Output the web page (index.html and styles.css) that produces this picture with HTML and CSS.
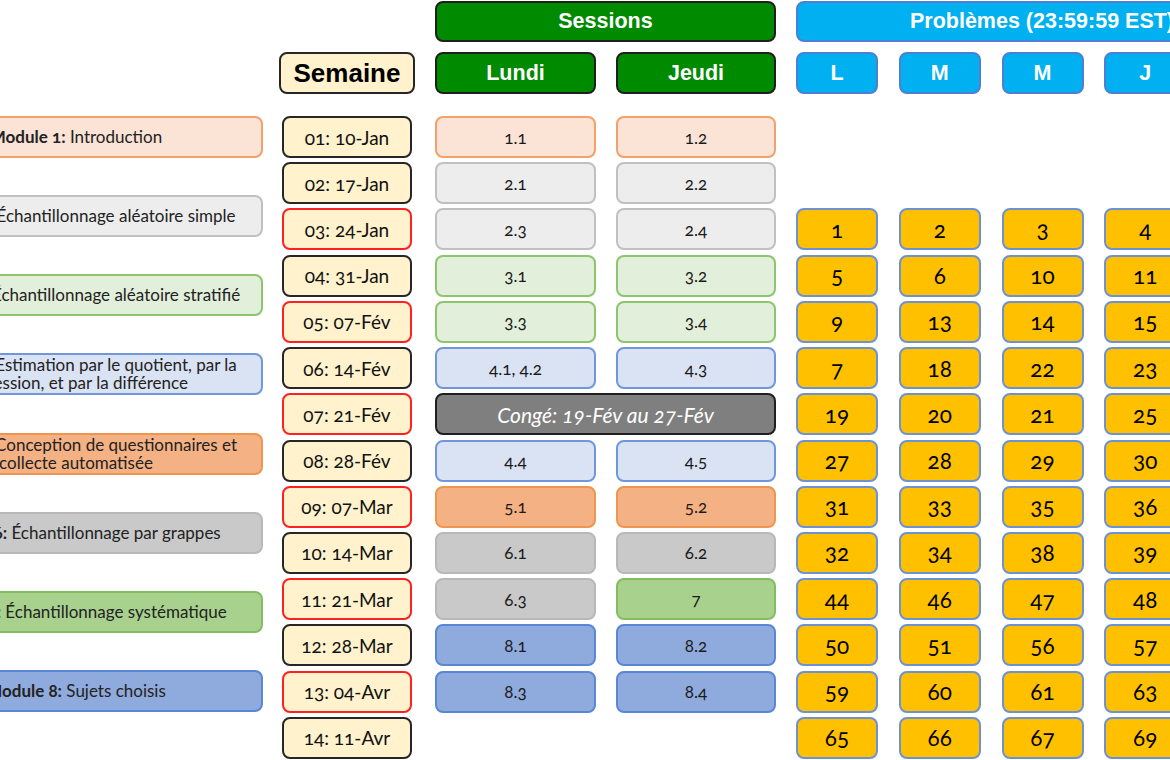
FILE: index.html
```html
<!DOCTYPE html>
<html lang="fr">
<head>
<meta charset="utf-8">
<title>Calendrier du cours</title>
<link rel="stylesheet" href="styles.css">
</head>
<body>
<main class="board">
  <section class="modules">
    <div class="module m1"><p><b>Module 1:</b> Introduction</p></div>
    <div class="module m2"><p><b>Module 2:</b> Échantillonnage aléatoire simple</p></div>
    <div class="module m3"><p><b>Module 3:</b> Échantillonnage aléatoire stratifié</p></div>
    <div class="module m4"><p><b>Module 4:</b> Estimation par le quotient, par la<br>régression, et par la différence</p></div>
    <div class="module m5"><p><b>Module 5:</b> Conception de questionnaires et<br>collecte automatisée</p></div>
    <div class="module m6"><p><b>Module 6:</b> Échantillonnage par grappes</p></div>
    <div class="module m7"><p><b>Module 7:</b> Échantillonnage systématique</p></div>
    <div class="module m8"><p><b>Module 8:</b> Sujets choisis</p></div>
  </section>

  <section class="weeks">
    <div class="week-head">Semaine</div>
    <div class="week-list">
      <div class="week">01: 10-Jan</div>
      <div class="week">02: 17-Jan</div>
      <div class="week alert">03: 24-Jan</div>
      <div class="week">04: 31-Jan</div>
      <div class="week alert">05: 07-Fév</div>
      <div class="week">06: 14-Fév</div>
      <div class="week alert">07: 21-Fév</div>
      <div class="week">08: 28-Fév</div>
      <div class="week alert">09: 07-Mar</div>
      <div class="week">10: 14-Mar</div>
      <div class="week alert">11: 21-Mar</div>
      <div class="week">12: 28-Mar</div>
      <div class="week alert">13: 04-Avr</div>
      <div class="week">14: 11-Avr</div>
    </div>
  </section>

  <section class="sessions">
    <div class="group-head green">Sessions</div>
    <div class="session-days">
      <div class="day-head green">Lundi</div>
      <div class="day-head green">Jeudi</div>
    </div>
    <div class="session-grid">
      <div class="session m1">1.1</div><div class="session m1">1.2</div>
      <div class="session m2">2.1</div><div class="session m2">2.2</div>
      <div class="session m2">2.3</div><div class="session m2">2.4</div>
      <div class="session m3">3.1</div><div class="session m3">3.2</div>
      <div class="session m3">3.3</div><div class="session m3">3.4</div>
      <div class="session m4">4.1, 4.2</div><div class="session m4">4.3</div>
      <div class="session break">Congé: 19-Fév au 27-Fév</div>
      <div class="session m4">4.4</div><div class="session m4">4.5</div>
      <div class="session m5">5.1</div><div class="session m5">5.2</div>
      <div class="session m6">6.1</div><div class="session m6">6.2</div>
      <div class="session m6">6.3</div><div class="session m7">7</div>
      <div class="session m8">8.1</div><div class="session m8">8.2</div>
      <div class="session m8">8.3</div><div class="session m8">8.4</div>
    </div>
  </section>

  <section class="problems">
    <div class="group-head blue">Problèmes (23:59:59 EST)</div>
    <div class="problem-days">
      <div class="day-head blue">L</div>
      <div class="day-head blue">M</div>
      <div class="day-head blue">M</div>
      <div class="day-head blue">J</div>
      <div class="day-head blue">V</div>
    </div>
    <div class="problem-grid">
      <div class="prob">1</div><div class="prob">2</div><div class="prob">3</div><div class="prob">4</div><div class="prob"></div>
      <div class="prob">5</div><div class="prob">6</div><div class="prob">10</div><div class="prob">11</div><div class="prob"></div>
      <div class="prob">9</div><div class="prob">13</div><div class="prob">14</div><div class="prob">15</div><div class="prob"></div>
      <div class="prob">7</div><div class="prob">18</div><div class="prob">22</div><div class="prob">23</div><div class="prob"></div>
      <div class="prob">19</div><div class="prob">20</div><div class="prob">21</div><div class="prob">25</div><div class="prob"></div>
      <div class="prob">27</div><div class="prob">28</div><div class="prob">29</div><div class="prob">30</div><div class="prob"></div>
      <div class="prob">31</div><div class="prob">33</div><div class="prob">35</div><div class="prob">36</div><div class="prob"></div>
      <div class="prob">32</div><div class="prob">34</div><div class="prob">38</div><div class="prob">39</div><div class="prob"></div>
      <div class="prob">44</div><div class="prob">46</div><div class="prob">47</div><div class="prob">48</div><div class="prob"></div>
      <div class="prob">50</div><div class="prob">51</div><div class="prob">56</div><div class="prob">57</div><div class="prob"></div>
      <div class="prob">59</div><div class="prob">60</div><div class="prob">61</div><div class="prob">63</div><div class="prob"></div>
      <div class="prob">65</div><div class="prob">66</div><div class="prob">67</div><div class="prob">69</div><div class="prob"></div>
    </div>
  </section>
</main>
</body>
</html>
```

FILE: styles.css
```css
html, body {
  margin: 0;
  padding: 0;
  background: #ffffff;
}

body {
  width: 1170px;
  height: 760px;
  overflow: hidden;
  font-family: Lato, "Noto Sans", sans-serif;
  font-variant-numeric: oldstyle-nums;
  color: #1a1a1a;
}

.board {
  display: flex;
  align-items: flex-start;
  padding-top: 1px;
  width: max-content;
}

/* ---------- shared tile ---------- */
.module,
.session {
  box-sizing: border-box;
  height: 42px;
  border: 2px solid #bfbfbf;
  border-radius: 8px;
  display: flex;
  align-items: center;
  justify-content: center;
  text-align: center;
}

/* module colours (after the shared tile so they win) */
.m1 { background: #fbe3d6; border-color: #f4a06a; }
.m2 { background: #ededed; border-color: #c0c0c0; }
.m3 { background: #e2efda; border-color: #8cc56b; }
.m4 { background: #dae3f3; border-color: #6f97da; }
.m5 { background: #f4b183; border-color: #ee964f; }
.m6 { background: #c9c9c9; border-color: #b8b8b8; }
.m7 { background: #a9d18e; border-color: #83bd60; }
.m8 { background: #8faadc; border-color: #5a86d6; }

/* ---------- modules ---------- */
.modules {
  display: flex;
  flex-direction: column;
  gap: 37.14px;
  width: 374px;
  margin-left: -111px;
  margin-top: 115px;
}

.module {
  font-size: 17px;
  line-height: 18px;
  color: #222;
}

.module p {
  margin: 0;
  white-space: nowrap;
}

.module b {
  font-weight: 700;
}

/* ---------- weeks ---------- */
.weeks {
  width: 136px;
  margin-left: 16px;
  margin-top: 51px;
}

.week-head {
  box-sizing: border-box;
  height: 42px;
  background: #fff2cc;
  border: 2px solid #262626;
  border-radius: 8px;
  display: flex;
  align-items: center;
  justify-content: center;
  font-family: "Liberation Sans", Arial, sans-serif;
  font-weight: 700;
  font-size: 26px;
  color: #000;
}

.week-list {
  margin-top: 22px;
  padding: 0 3px;
  display: flex;
  flex-direction: column;
  gap: 4.23px;
}

.week {
  box-sizing: border-box;
  height: 42px;
  background: #fff2cc;
  border: 2px solid #262626;
  border-radius: 8px;
  display: flex;
  align-items: center;
  justify-content: center;
  font-size: 19px;
  color: #111;
}

.week.alert {
  border-color: #ff2020;
}

/* ---------- headers ---------- */
.group-head,
.day-head {
  box-sizing: border-box;
  border-radius: 8px;
  display: flex;
  align-items: center;
  justify-content: center;
  color: #ffffff;
  font-family: "Liberation Sans", Arial, sans-serif;
  font-weight: 700;
  font-variant-numeric: lining-nums;
  font-size: 21.5px;
}

.group-head {
  height: 41px;
}

.day-head {
  height: 42px;
}

.green {
  background: #008a00;
  border: 2px solid #1f1f1f;
}

.blue {
  background: #00b0f0;
  border: 2px solid #4f7fd2;
}

/* ---------- sessions ---------- */
.sessions {
  width: 341px;
  margin-left: 20px;
}

.session-days,
.session-grid {
  display: grid;
  grid-template-columns: 161px 160px;
  column-gap: 20px;
}

.session-days {
  margin-top: 10px;
}

.session-grid {
  margin-top: 22px;
  grid-auto-rows: 42px;
  row-gap: 4.23px;
}

.session {
  font-size: 17px;
  color: #1a1a1a;
}

.session.break {
  grid-column: 1 / -1;
  background: #7f7f7f;
  border-color: #1f1f1f;
  color: #ffffff;
  font-style: italic;
  font-size: 21px;
}

/* ---------- problems ---------- */
.problems {
  width: 492px;
  margin-left: 20px;
  flex-shrink: 0;
}

.problem-days,
.problem-grid {
  display: grid;
  grid-template-columns: repeat(5, 82px);
  column-gap: 20.75px;
}

.problem-days {
  margin-top: 10px;
}

.problem-grid {
  margin-top: 114.46px;
  grid-auto-rows: 42px;
  row-gap: 4.23px;
}

.prob {
  box-sizing: border-box;
  background: #ffc000;
  border: 2px solid #6d92d3;
  border-radius: 8px;
  display: flex;
  align-items: center;
  justify-content: center;
  font-size: 22.5px;
  color: #000;
}
```
